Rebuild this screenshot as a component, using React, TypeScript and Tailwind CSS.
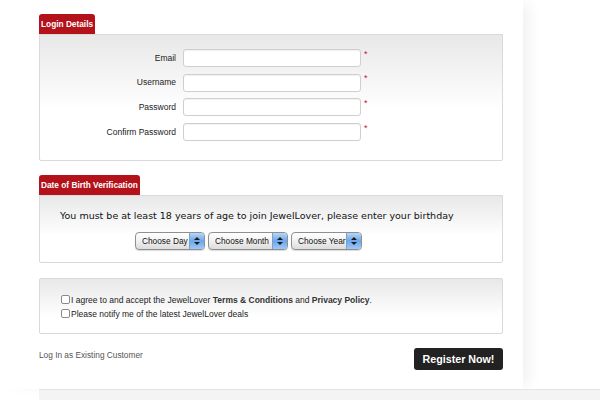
import React from "react";

const pageFont = { fontFamily: '"Liberation Sans", Arial, sans-serif' };
const wideFont = { fontFamily: '"DejaVu Sans", "Lucida Grande", sans-serif' };

function Field({ label }: { label: string }) {
  return (
    <div className="flex items-center h-[18px]">
      <label className="w-[143px] text-right pr-[7px] text-[8.5px] text-[#222]">
        {label}
      </label>
      <div className="w-[178px] h-[18px] bg-white border border-[#cfcfcf] rounded-[3px] shadow-[inset_0_1px_1px_rgba(0,0,0,0.06)]" />
      <span className="ml-[3px] -mt-[8px] text-[9px] leading-none text-[#c0202a]">*</span>
    </div>
  );
}

function AquaSelect({ label, width }: { label: string; width: string }) {
  return (
    <div
      className={`${width} h-[18px] flex rounded-[4px] border border-[#8f8f8f] overflow-hidden bg-gradient-to-b from-white via-[#f1f1f1] to-[#dcdcdc] shadow-[0_1px_1px_rgba(0,0,0,0.15)]`}
    >
      <span className="flex-1 pl-[6px] text-[8.3px] leading-[16px] text-[#111] whitespace-nowrap overflow-hidden">
        {label}
      </span>
      <span className="w-[15px] flex flex-col items-center justify-center gap-[2px] bg-gradient-to-b from-[#b8d6f6] via-[#6aa6ea] to-[#9fcaf7] border-l border-[#7f9fc8]">
        <svg width="6" height="3" viewBox="0 0 6 3">
          <path d="M0 3 L3 0 L6 3 Z" fill="#1b1b1b" />
        </svg>
        <svg width="6" height="3" viewBox="0 0 6 3">
          <path d="M0 0 L3 3 L6 0 Z" fill="#1b1b1b" />
        </svg>
      </span>
    </div>
  );
}

function Tab({ children }: { children: React.ReactNode }) {
  return (
    <div className="w-fit bg-[#b3121b] text-white text-[8.3px] font-bold px-[2px] h-[20px] leading-[20px] rounded-t-[3px]">
      {children}
    </div>
  );
}

function Box({
  children,
  className,
}: {
  children: React.ReactNode;
  className: string;
}) {
  return (
    <div
      className={`w-[464px] border border-[#d9d9d9] rounded-b-[2px] bg-gradient-to-b from-[#e8e8e8] to-white to-60% ${className}`}
    >
      {children}
    </div>
  );
}

function Check() {
  return (
    <span className="inline-block w-[9px] h-[9px] mr-[1px] border border-[#8a8a8a] rounded-[2px] bg-white align-[-1px]" />
  );
}

export default function App() {
  return (
    <div className="w-[600px] h-[400px] bg-white overflow-hidden" style={pageFont}>
      <div className="w-[523px] h-[389px] bg-white pl-[39px] pt-[14px] shadow-[10px_0_14px_-4px_rgba(0,0,0,0.06)]">
        {/* Login details */}
        <Tab>Login Details</Tab>
        <Box className="h-[127px] pt-[14px] flex flex-col gap-[6.7px]">
          <Field label="Email" />
          <Field label="Username" />
          <Field label="Password" />
          <Field label="Confirm Password" />
        </Box>

        {/* Date of birth */}
        <div className="mt-[14px]">
          <Tab>Date of Birth Verification</Tab>
        </div>
        <Box className="h-[68px] pt-[14px]">
          <p className="pl-[20px] text-[9.5px] text-[#111] leading-[12px]" style={wideFont}>
            You must be at least 18 years of age to join JewelLover, please enter your birthday
          </p>
          <div className="flex gap-[3px] pl-[95px] mt-[10px]">
            <AquaSelect label="Choose Day" width="w-[70px]" />
            <AquaSelect label="Choose Month" width="w-[80px]" />
            <AquaSelect label="Choose Year" width="w-[71px]" />
          </div>
        </Box>

        {/* Terms */}
        <div className="w-[464px] h-[56px] mt-[15px] border border-[#d9d9d9] rounded-[2px] bg-gradient-to-b from-[#e8e8e8] to-white to-70% pt-[14px] pl-[21px] text-[8.5px] text-[#222] leading-[14px]">
          <div>
            <Check />I agree to and accept the JewelLover{" "}
            <b className="text-[#333]">Terms &amp; Conditions</b> and{" "}
            <b className="text-[#333]">Privacy Policy</b>.
          </div>
          <div>
            <Check />Please notify me of the latest JewelLover deals
          </div>
        </div>

        <div className="w-[464px] flex items-center justify-between mt-[14px]">
          <a className="text-[8.3px] text-[#555] -mt-[8px]">Log In as Existing Customer</a>
          <button className="w-[89px] h-[22px] bg-[#222] rounded-[3px] text-white text-[10.7px] font-bold">
            Register Now!
          </button>
        </div>
      </div>
      <div className="ml-[39px] h-[20px] bg-[#f4f4f4] border-t border-[#e4e4e4]" />
    </div>
  );
}
